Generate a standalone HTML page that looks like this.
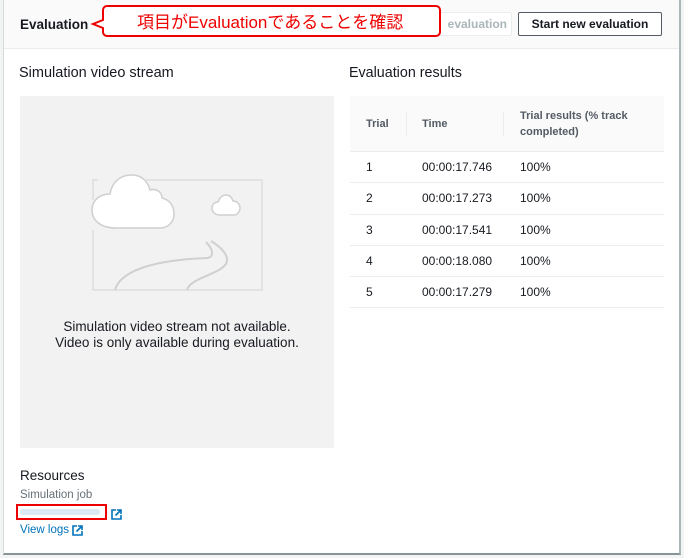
<!DOCTYPE html>
<html><head><style>
body{margin:0;width:684px;height:558px;background:#f2f3f3;font-family:"Liberation Sans","Noto Sans CJK JP",sans-serif;position:relative;overflow:hidden;color:#16191f}
.card{position:absolute;left:3px;top:-1px;width:675px;height:553px;background:#fff;border:1px solid #d5dbdb;border-right:2px solid #aab7b8;border-bottom:2px solid #879596}
.hdr{position:absolute;left:0;top:0;right:0;height:48px;background:#fafafa;border-bottom:1px solid #eaeded}
.a{position:absolute;white-space:nowrap}
.btn{position:absolute;height:22px;border:1px solid #545b64;border-radius:2px;font-size:12px;font-weight:bold;line-height:22px;text-align:center;background:#fff}
table{position:absolute;left:346px;top:96px;width:314px;border-collapse:collapse;font-size:12px}
td{height:30.3px;border-bottom:1px solid #eaeded;padding:0 0 0 16px;color:#16191f}
th{height:55px;background:#fafafa;text-align:left;font-weight:bold;padding:0 0 0 16px;color:#545b64;border-bottom:1px solid #eaeded;font-size:11px}
.lnk{color:#0073bb;font-size:11px}
</style></head><body>
<div class="card">
<div class="hdr"></div>
<div class="a" style="left:16px;top:17px;font-size:13.5px;font-weight:bold">Evaluation</div>
<div class="btn" style="left:400px;top:12px;border-color:#eaeded;color:#aab7b8;text-align:right;padding-right:4px;width:102px">evaluation</div>
<div class="btn" style="left:514px;top:12px;width:142px">Start new evaluation</div>
<div class="a" style="left:15px;top:65px;font-size:14.5px">Simulation video stream</div>
<div class="a" style="left:345px;top:65px;font-size:14.3px">Evaluation results</div>
<div class="a" style="left:16px;top:96px;width:314px;height:352px;background:#f2f2f2"></div>
<svg class="a" style="left:76px;top:160px" width="200" height="140" viewBox="0 0 200 140">
<g fill="none" stroke="#dcdcdc" stroke-width="1.5"><path d="M13 40V20h5M66 20H182V130H13V70"/></g>
<path d="M36 68C20 68 12 60 12 50C12 40 20 34 30 34C32 22 40 15 52 15C62 15 68 22 70 30C76 28 82 32 82 38C90 40 94 46 94 54C94 62 88 68 80 68Z" fill="#fff" stroke="#cfcfcf" stroke-width="1.5"/>
<path d="M140 55C135 55 132 52 132 48C132 44 135 42 138 42C140 37 143 35 146 35C150 35 152 38 153 41C157 41 160 44 160 48C160 52 157 55 154 55Z" fill="#fff" stroke="#cfcfcf" stroke-width="1.5"/>
<g fill="none" stroke="#d0d0d0" stroke-width="2"><path d="M35 130C40 112 70 100 128 98C135 96 132 88 126 82"/><path d="M107 130C110 118 138 115 146 104C150 96 142 88 131 81"/></g>
</svg>
<div class="a" style="left:16px;top:319px;width:314px;text-align:center;font-size:13.5px;line-height:16px;color:#16191f">Simulation video stream not available.<br>Video is only available during evaluation.</div>
<div class="a" style="left:16px;top:468px;font-size:13.5px">Resources</div>
<div class="a" style="left:16px;top:489px;font-size:11.5px;color:#687078">Simulation job</div>
<div class="a" style="left:16px;top:509px;width:80px;height:6px;background:#dceaf5;border-radius:3px"></div>
<div class="a" style="left:12px;top:504px;width:87px;height:12px;border:2px solid #e00"></div>
<svg class="a" style="left:107px;top:509px" width="11" height="11" viewBox="0 0 11 11" fill="none" stroke="#0073bb" stroke-width="1.6"><path d="M5 1H1v9h9V6M6 1h4v4M10 1L4.5 6.5"/></svg>
<div class="a lnk" style="left:16px;top:524px;font-size:11.5px">View logs</div>
<svg class="a" style="left:68px;top:525px" width="11" height="11" viewBox="0 0 11 11" fill="none" stroke="#0073bb" stroke-width="1.6"><path d="M5 1H1v9h9V6M6 1h4v4M10 1L4.5 6.5"/></svg>
<table>
<tr><th style="width:40px">Trial</th><th style="width:82px">Time</th><th style="line-height:16px">Trial results (% track<br>completed)</th></tr>
<tr><td>1</td><td>00:00:17.746</td><td>100%</td></tr>
<tr><td>2</td><td>00:00:17.273</td><td>100%</td></tr>
<tr><td>3</td><td>00:00:17.541</td><td>100%</td></tr>
<tr><td>4</td><td>00:00:18.080</td><td>100%</td></tr>
<tr><td>5</td><td>00:00:17.279</td><td>100%</td></tr>
</table>
<div class="a" style="left:402px;top:112px;width:1px;height:24px;background:#eaeded"></div>
<div class="a" style="left:499px;top:112px;width:1px;height:24px;background:#eaeded"></div>
</div>
<svg class="a" style="left:90px;top:4px" width="352" height="34" viewBox="0 0 352 34">
<path d="M17 2H346a4 4 0 0 1 4 4V28a4 4 0 0 1-4 4H17a4 4 0 0 1-4-4V24L3 20L13 16V6a4 4 0 0 1 4-4Z" fill="#fff" stroke="#e00" stroke-width="2"/>
</svg>
<div class="a" style="left:137px;top:8px;font-size:17px;color:#e00">項目がEvaluationであることを確認</div>
</body></html>
